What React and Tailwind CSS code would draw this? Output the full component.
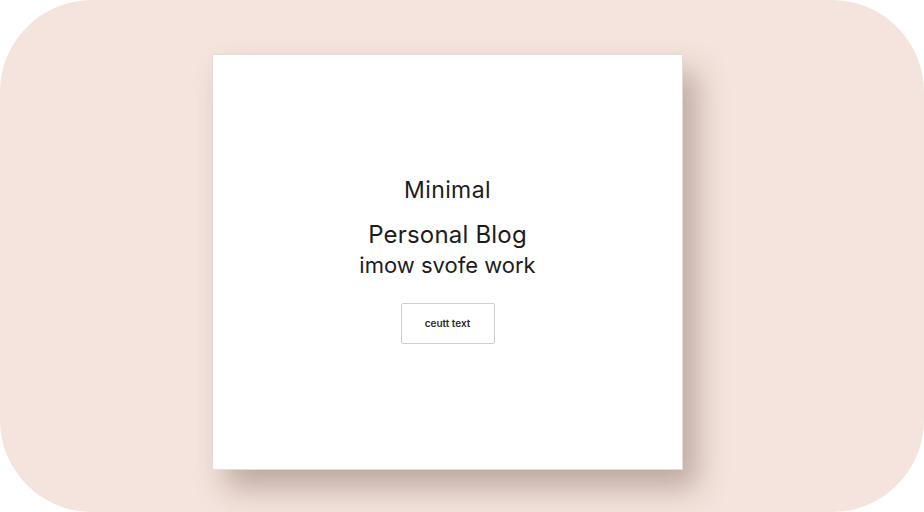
import React from 'react';

const App = () => {
  return (
    <div className="w-[924px] h-[512px] bg-white overflow-hidden" style={{ fontFamily: 'Inter, "Open Sans", sans-serif' }}>
      <div className="w-full h-full rounded-[92px] bg-[#f4e4dd] pl-[212px] pt-[54px]">
        {/* Card */}
        <div className="w-[471px] h-[416px] bg-white border border-[#e6dcd6] shadow-[14px_18px_28px_rgba(90,60,50,0.35)] flex flex-col items-center">
          <h1 className="mt-[124px] text-[23px] leading-none text-[#1c1c1c] tracking-[0.4px]">Minimal</h1>
          <h2 className="mt-[21px] text-[24px] leading-none text-[#1c1c1c] tracking-[0.2px]">Personal Blog</h2>
          <p className="mt-[7px] text-[22px] leading-none text-[#1c1c1c]">imow svofe work</p>
          <button className="mt-[27px] w-[94px] h-[41px] border border-[#cfcfcf] rounded-[2px] bg-white text-[10px] text-[#2a2a2a] font-semibold">
            ceutt text
          </button>
        </div>
      </div>
    </div>
  );
};

export default App;
